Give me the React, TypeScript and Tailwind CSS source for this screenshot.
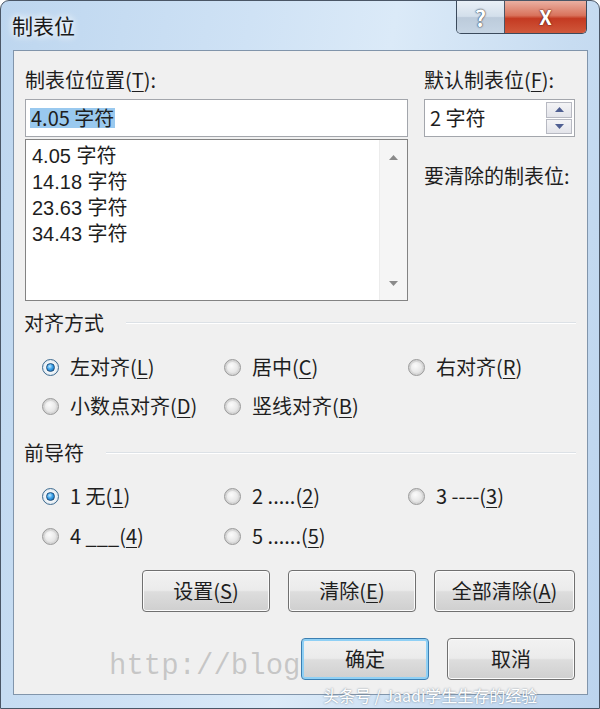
import React from "react";

const cjk = "font-['Noto_Sans_CJK_SC','Noto_Sans',sans-serif]";

function Key({ k }: { k: string }) {
  return (
    <>
      (<span className="underline underline-offset-[3px] decoration-1">{k}</span>)
    </>
  );
}

function Radio({ checked }: { checked?: boolean }) {
  if (checked) {
    return (
      <div className="flex h-[17px] w-[17px] items-center justify-center rounded-full border border-[#3d6a8f] bg-[radial-gradient(circle,#f4f8fb_45%,#cdd9e3_100%)]">
        <div className="h-[9px] w-[9px] rounded-full border border-[#1d4f7c] bg-[radial-gradient(circle_at_40%_35%,#bfe9ff_0%,#3aa1ea_45%,#0f5a9e_100%)]" />
      </div>
    );
  }
  return (
    <div className="flex h-[17px] w-[17px] items-center justify-center rounded-full border border-[#9a9a9a] bg-[radial-gradient(circle,#e6e6e6_30%,#c4c4c4_100%)]">
      <div className="h-[11px] w-[11px] rounded-full bg-[radial-gradient(circle_at_40%_35%,#fbfbfb_0%,#e9e9e9_60%,#dadada_100%)]" />
    </div>
  );
}

function Option({ checked, children }: { checked?: boolean; children: React.ReactNode }) {
  return (
    <div className="flex h-[24px] items-center">
      <Radio checked={checked} />
      <span className="ml-[11px] text-[20px] leading-[24px] text-[#1e1e1e]">{children}</span>
    </div>
  );
}

function GroupLabel({ text, lineLeft }: { text: string; lineLeft: string }) {
  return (
    <div className="flex h-[24px] items-center pl-[10px] pr-[11px]">
      <span className="text-[20px] leading-[24px] text-[#1e1e1e]">{text}</span>
      <div className={`${lineLeft} flex-1 border-t border-[#dce1e6] border-b border-b-white`} />
    </div>
  );
}

function Btn({ w, focused, children }: { w: string; focused?: boolean; children: React.ReactNode }) {
  return (
    <div
      className={`${w} flex h-[42px] items-center justify-center rounded-[4px] border ${
        focused
          ? "border-[#3c7fb1] shadow-[inset_0_0_0_2px_#8fd0f5]"
          : "border-[#707070] shadow-[inset_0_0_0_1px_#fbfbfb]"
      } bg-[linear-gradient(#f2f2f2_0%,#ebebeb_48%,#dddddd_52%,#cfcfcf_100%)] text-[20px] leading-[24px] text-[#1e1e1e]`}
    >
      {children}
    </div>
  );
}

function Tri({ up, color }: { up?: boolean; color: string }) {
  return (
    <svg width="9" height="5" viewBox="0 0 9 5">
      <path d={up ? "M0 5 L4.5 0 L9 5 Z" : "M0 0 L4.5 5 L9 0 Z"} fill={color} />
    </svg>
  );
}

const tabStops = ["4.05 字符", "14.18 字符", "23.63 字符", "34.43 字符"];

export default function App() {
  return (
    <div className={`${cjk} relative h-[709px] w-[600px] overflow-hidden rounded-t-[9px] border border-[#4a5666] bg-[linear-gradient(100deg,#bdd6ef_0%,#cfe2f5_35%,#dbeaf8_55%,#c7dcf1_80%,#bcd4ee_100%)]`}>
      {/* title bar */}
      <div className="flex h-[49px] items-start justify-between">
        <div className="mt-[10px] pl-[11px] text-[21px] leading-[28px] text-[#1a1a1a] [text-shadow:0_0_6px_#ffffff,0_0_10px_#ffffff]">
          制表位
        </div>
        <div className="mr-[12px] flex h-[33px] overflow-hidden rounded-b-[5px] border border-t-0 border-[#3b4a5c]">
          <div className="flex w-[48px] items-center justify-center border-r border-[#4b5566] bg-[linear-gradient(#e9f0f7_0%,#d3dfeb_48%,#bccbdb_52%,#c6d5e4_100%)] text-[22px] font-bold leading-none text-white [text-shadow:0_0_2px_#27354a,0_0_1px_#27354a]">
            ?
          </div>
          <div className="flex w-[81px] items-center justify-center bg-[linear-gradient(#eab0a2_0%,#d9735c_45%,#c43a22_55%,#d0583b_100%)] text-[20px] font-bold leading-none text-white [text-shadow:0_0_2px_#5a1a10,0_0_1px_#5a1a10]">
            X
          </div>
        </div>
      </div>

      {/* client area */}
      <div className="ml-[12px] mr-[11px] h-[645px] border border-[#8195ab] bg-[#f0f0f0] text-[#1e1e1e]">
        <div className="flex pl-[11px] pt-[17px]">
          <div className="w-[383px]">
            <div className="text-[20px] leading-[24px]">
              制表位位置<Key k="T" />:
            </div>
            <div className="mt-[7px] flex h-[38px] items-center border border-[#a3a6ac] bg-white px-[4px]">
              <span className="bg-[#99c9ef] px-[1px] text-[20px] leading-[20px]">4.05 字符</span>
            </div>
            <div className="mt-[2px] flex h-[162px] border border-[#838383] bg-white">
              <div className="flex-1 pl-[6px] pt-[3px] font-['Liberation_Sans','Noto_Sans_CJK_SC',sans-serif] text-[20px]">
                {tabStops.map((t) => (
                  <div key={t} className="flex h-[26px] items-center leading-[23px]">
                    {t}
                  </div>
                ))}
              </div>
              <div className="flex w-[28px] flex-col items-center justify-between border-l border-[#ececec] bg-[#f5f5f5] pb-[14px] pt-[15px]">
                <Tri up color="#8a8a8a" />
                <Tri color="#8a8a8a" />
              </div>
            </div>
          </div>
          <div className="ml-[16px] w-[151px]">
            <div className="text-[20px] leading-[24px]">
              默认制表位<Key k="F" />:
            </div>
            <div className="mt-[7px] flex h-[38px] items-center border border-[#a3a6ac] bg-white pl-[5px] pr-[2px]">
              <span className="flex-1 text-[20px] leading-[24px]">2 字符</span>
              <div className="flex h-[32px] w-[26px] flex-col gap-[1px]">
                <div className="flex flex-1 items-center justify-center border border-[#b7b9c2] bg-[linear-gradient(#f4f4f6,#e3e4ea)]">
                  <Tri up color="#4f5f92" />
                </div>
                <div className="flex flex-1 items-center justify-center border border-[#b7b9c2] bg-[linear-gradient(#f4f4f6,#e3e4ea)]">
                  <Tri color="#4f5f92" />
                </div>
              </div>
            </div>
            <div className="mt-[27px] text-[20px] leading-[24px]">要清除的制表位:</div>
          </div>
        </div>

        <div className="mt-[10px]">
          <GroupLabel text="对齐方式" lineLeft="ml-[22px]" />
        </div>
        <div className="ml-[28px] mt-[20px] grid grid-cols-[182px_184px_auto] gap-y-[15px]">
          <Option checked>
            左对齐<Key k="L" />
          </Option>
          <Option>
            居中<Key k="C" />
          </Option>
          <Option>
            右对齐<Key k="R" />
          </Option>
          <Option>
            小数点对齐<Key k="D" />
          </Option>
          <Option>
            竖线对齐<Key k="B" />
          </Option>
        </div>

        <div className="mt-[23px]">
          <GroupLabel text="前导符" lineLeft="ml-[22px]" />
        </div>
        <div className="ml-[28px] mt-[19px] grid grid-cols-[182px_184px_auto] gap-y-[16px]">
          <Option checked>
            1 无<Key k="1" />
          </Option>
          <Option>
            2 .....<Key k="2" />
          </Option>
          <Option>
            3 ----<Key k="3" />
          </Option>
          <Option>
            4 ___<Key k="4" />
          </Option>
          <Option>
            5 ......<Key k="5" />
          </Option>
        </div>

        <div className="mt-[22px] flex justify-end gap-[18px] pr-[12px]">
          <Btn w="w-[128px]">
            设置<Key k="S" />
          </Btn>
          <Btn w="w-[128px]">
            清除<Key k="E" />
          </Btn>
          <Btn w="w-[141px]">
            全部清除<Key k="A" />
          </Btn>
        </div>
        <div className="mt-[26px] flex justify-end gap-[18px] pr-[12px]">
          <Btn w="w-[128px]" focused>
            确定
          </Btn>
          <Btn w="w-[128px]">取消</Btn>
        </div>
      </div>

      {/* watermarks */}
      <div className="pointer-events-none absolute left-[108px] top-[650px] font-['Liberation_Mono',monospace] text-[29px] leading-[32px] text-[rgba(120,120,120,0.35)]">
        http://blog
      </div>
      <div className="pointer-events-none absolute left-[322px] top-[684px] text-[16px] leading-[20px] text-white [text-shadow:0_0_2px_#6a7a8a]">
        头条号 / Jaadi学生生存的经验
      </div>
    </div>
  );
}
